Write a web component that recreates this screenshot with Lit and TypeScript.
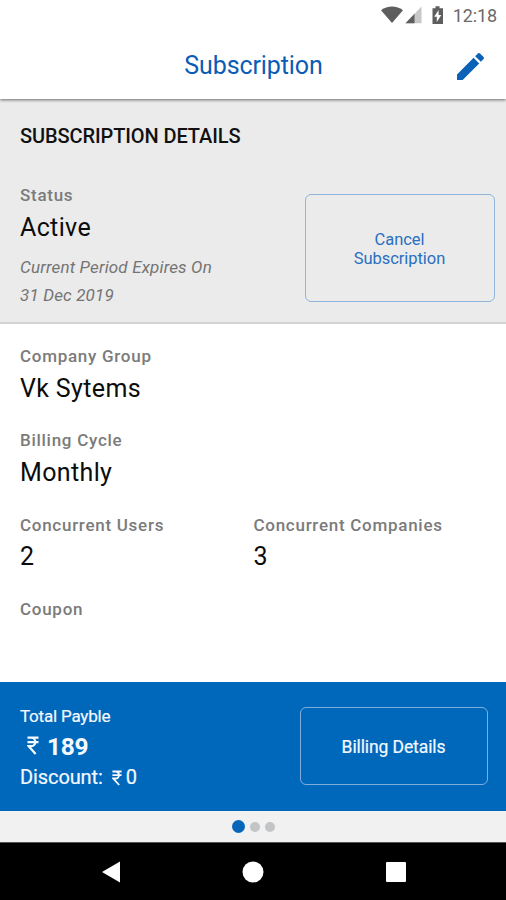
import { LitElement, html, css, svg } from "lit";
import { customElement, property } from "lit/decorators.js";

@customElement("detail-field")
class DetailField extends LitElement {
  @property() label = "";
  @property() value = "";

  static styles = css`
    :host { display: block; height: 57px; }
    .label { font-size: 17px; line-height: 18px; font-weight: 500; letter-spacing: 0.72px; color: #7b7b7b; white-space: nowrap; }
    .value { margin-top: 7.6px; font-size: 25px; line-height: 32px; letter-spacing: 0.36px; color: #0c0c0c; white-space: nowrap; }
  `;

  render() {
    return html`<div class="label">${this.label}</div>
      <div class="value">${this.value}</div>`;
  }
}

const rupee = svg`<path d="M0.5 1.2H11.5M0.5 5.6H11.5M1 1.2H4.2C9.6 1.2 9.6 9.6 4.2 9.6H1.6L8.6 17.4" fill="none" stroke="currentColor" stroke-width="2.2"/>`;

@customElement("app-root")
class AppRoot extends LitElement {
  static styles = css`
    :host {
      display: flex; flex-direction: column; width: 506px; height: 900px;
      overflow: hidden; background: #fff; font-family: Roboto, sans-serif; box-sizing: border-box;
    }
    * { box-sizing: border-box; }
    svg { display: block; flex: none; }
    .status-bar { height: 32px; flex: none; display: flex; justify-content: flex-end; align-items: center; padding: 0 9px 2px 0; }
    .clock { margin: 2px 0 0 9px; font-size: 18px; line-height: 30px; letter-spacing: -0.1px; color: #6a6a6a; }
    .title-bar {
      height: 67px; flex: none; display: grid; grid-template-columns: 1fr auto 1fr; align-items: center;
      position: relative; background: #fff; box-shadow: 0 1px 3px rgba(0, 0, 0, 0.55);
      clip-path: inset(0 0 -8px 0);
    }
    .title { grid-column: 2; font-size: 25px; line-height: 30px; letter-spacing: -0.1px; color: #0b5cb5; padding: 1px 0 0 1px; white-space: nowrap; }
    .edit { justify-self: end; margin: 2px 22px 0 0; }
    .summary { height: 225px; flex: none; background: #ebebeb; border-bottom: 2px solid #d3d3d3; padding: 24px 11.5px 0 20px; }
    .heading { font-size: 20px; line-height: 26px; font-weight: 500; letter-spacing: -0.1px; color: #111; white-space: nowrap; }
    .summary-row { display: flex; justify-content: space-between; padding-top: 36px; }
    .summary-row detail-field { padding-top: 1px; }
    .note { padding-top: 11px; font-size: 17px; line-height: 28px; font-style: italic; letter-spacing: 0.16px; color: #747474; white-space: nowrap; }
    .button { display: flex; align-items: center; justify-content: center; text-align: center; background: none; font: inherit; padding: 0; }
    .cancel { width: 190px; height: 108px; margin-top: 9px; border: 1.5px solid #8fb5dc; border-radius: 6px; color: #2a6fc0; font-size: 16.5px; line-height: 19px; letter-spacing: -0.05px; padding-top: 2px; }
    .details { flex: 1; padding: 23px 20px 0; display: grid; grid-template-columns: 233.5px 232.5px; grid-auto-rows: 57px; row-gap: 27.3px; }
    .wide { grid-column: 1 / -1; }
    .total { height: 129px; flex: none; background: #0068ba; color: #f4f8ff; display: flex; justify-content: space-between; padding: 24px 18.5px 0 20px; }
    .total-label { font-size: 17px; line-height: 20px; letter-spacing: -0.2px; -webkit-text-stroke: 0.2px currentColor; }
    .amount { display: flex; align-items: center; padding: 5px 0 0 7px; font-size: 24.5px; line-height: 32px; font-weight: 700; gap: 8px; letter-spacing: -0.3px; }
    .amount svg { margin-top: -4px; }
    .discount { display: flex; align-items: center; padding-top: 1px; font-size: 20px; line-height: 26px; letter-spacing: -0.1px; -webkit-text-stroke: 0.2px currentColor; white-space: nowrap; }
    .discount svg { margin: 2px 4px 0 9px; }
    .billing { width: 188px; height: 78px; margin-top: 1px; border: 1.5px solid #7eaede; border-radius: 6px; color: inherit; font-size: 17.5px; letter-spacing: -0.1px; padding-top: 2px; -webkit-text-stroke: 0.2px currentColor; }
    .pager { height: 31px; flex: none; background: #f1f1f1; display: flex; align-items: center; justify-content: center; gap: 5px; }
    .dot { width: 10px; height: 10px; border-radius: 50%; background: #c2c4c6; }
    .current { width: 13px; height: 13px; background: #0866ba; }
    .nav { height: 58px; flex: none; background: #000; border-top: 1px solid #555; display: grid; grid-template-columns: repeat(3, 142.5px); justify-content: center; align-items: center; justify-items: center; }
  `;

  render() {
    return html`
      <div class="status-bar">
        <svg width="22" height="18" viewBox="0 0 22 18"><path d="M0 4.2C6.4-.7 15.6-.7 22 4.2L11 17Z" fill="#5e5e5e"/></svg>
        <svg width="20" height="18" viewBox="0 0 20 18"><path d="M2.5 17.3L18.5 .5V17.3Z" fill="#c8c8c8"/><path d="M2.5 17.3L11.5 7.8V17.3Z" fill="#5e5e5e"/></svg>
        <svg width="21" height="20" viewBox="0 0 21 20"><path d="M9.5 3.2H12.5V1.2H16.5V3.2H20V19H9.5Z" fill="#5e5e5e"/><path d="M15.6 5L11.2 11.8H13.8V17L18.3 10H15.6Z" fill="#fff"/></svg>
        <span class="clock">12:18</span>
      </div>
      <header class="title-bar">
        <span class="title">Subscription</span>
        <svg class="edit" width="27" height="27" viewBox="3 3 18 18"><path fill="#0b61b8" d="M3 17.25V21h3.75L17.81 9.94l-3.75-3.75L3 17.25zM20.71 7.04c.39-.39.39-1.02 0-1.41l-2.34-2.34c-.39-.39-1.02-.39-1.41 0l-1.83 1.83 3.75 3.75 1.83-1.83z"/></svg>
      </header>
      <section class="summary">
        <div class="heading">SUBSCRIPTION DETAILS</div>
        <div class="summary-row">
          <div>
            <detail-field label="Status" value="Active"></detail-field>
            <div class="note">Current Period Expires On<br />31 Dec 2019</div>
          </div>
          <button class="button cancel">Cancel<br />Subscription</button>
        </div>
      </section>
      <section class="details">
        <detail-field class="wide" label="Company Group" value="Vk Sytems"></detail-field>
        <detail-field class="wide" label="Billing Cycle" value="Monthly"></detail-field>
        <detail-field label="Concurrent Users" value="2"></detail-field>
        <detail-field label="Concurrent Companies" value="3"></detail-field>
        <detail-field label="Coupon"></detail-field>
      </section>
      <section class="total">
        <div>
          <div class="total-label">Total Payble</div>
          <div class="amount"><svg width="12" height="19" viewBox="0 0 12 18">${rupee}</svg><span>189</span></div>
          <div class="discount">Discount:<svg width="10" height="16" viewBox="0 0 12 18">${rupee}</svg><span>0</span></div>
        </div>
        <button class="button billing">Billing Details</button>
      </section>
      <div class="pager"><span class="dot current"></span><span class="dot"></span><span class="dot"></span></div>
      <nav class="nav">
        <svg width="18" height="22" viewBox="0 0 18 22"><path d="M0 11L18 .5V21.5Z" fill="#fff"/></svg>
        <svg width="22" height="22" viewBox="0 0 22 22"><circle cx="11" cy="11" r="10.5" fill="#fff"/></svg>
        <svg width="20" height="20" viewBox="0 0 20 20"><rect width="20" height="20" rx="1" fill="#fff"/></svg>
      </nav>
    `;
  }
}
